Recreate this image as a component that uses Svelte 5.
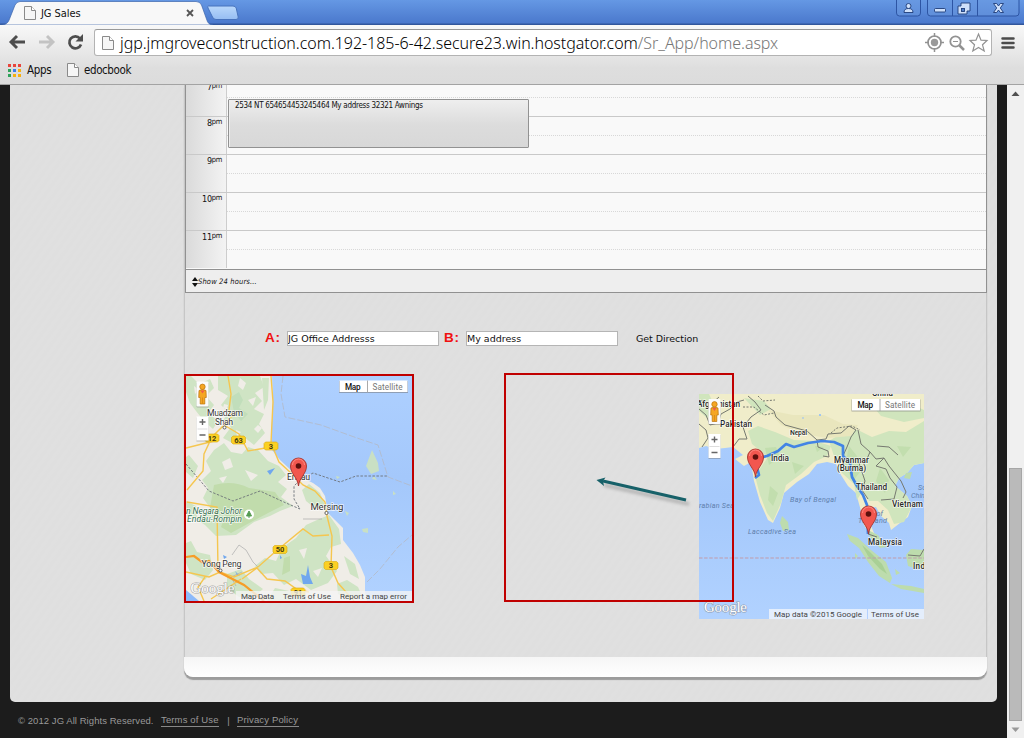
<script>
  const hours = ['8', '9', '10', '11'];
  const apps = ['#e8453c', '#e8453c', '#e8453c', '#2fa25a', '#3b7ded', '#f6b011', '#2fa25a', '#f6b011', '#f6b011'];
</script>

{#snippet page()}
  <svg class="doc" width="12" height="14" viewBox="0 0 12 14"><path d="M.5.5H7.5L11.5 4.5V13.5H.5Z" fill="#f6f6f6" stroke="#8a8a8a" /><path d="M7.5.5V4.5H11.5" fill="#fff" stroke="#8a8a8a" /></svg>
{/snippet}

{#snippet pin(x, y)}
  <g transform="translate({x} {y})">
    <path d="M0 0C-1-9-8-12-8-20A8 8 0 0 1 8-20C8-12 1-9 0 0Z" fill="#f2574f" stroke="#a3332c" stroke-width=".9" />
    <path d="M-6-21A6 6 0 0 1 6-21" fill="none" stroke="#ff8a80" stroke-width="1" />
    <circle cy="-20" r="2.8" fill="#5c100c" />
  </g>
{/snippet}

{#snippet controls(x, y)}
  <g transform="translate({x} {y})" class="roboto">
    <rect x="0" y="1" width="12" height="25" rx="1" fill="#777" opacity=".45" />
    <rect width="12" height="25" rx="1" fill="#fbfbfb" />
    <path d="M2.5 9Q6 7 9.500 9L9.800 16H8.300V22.500H3.700V16H2.200Z" fill="#f5a623" stroke="#b9720c" stroke-width=".7" />
    <path d="M6 16V22" stroke="#c77c12" stroke-width=".6" />
    <path d="M4 9H8L6 12Z" fill="#ee5b4e" />
    <circle cx="6" cy="5.300" r="2.700" fill="#f5a623" stroke="#b9720c" stroke-width=".7" />
    <rect x="0" y="36" width="12" height="24" fill="#777" opacity=".45" />
    <rect y="35" width="12" height="24" fill="#fff" />
    <path d="M1 47.500H11" stroke="#ddd" />
    <path d="M3 40.500H9M6 37.500V43.500M3 53.500H9" stroke="#666" stroke-width="1.400" />
  </g>
{/snippet}

{#snippet types(x, y)}
  <g transform="translate({x} {y})" class="roboto">
    <rect x="-.5" y=".5" width="69" height="12" fill="#777" opacity=".55" />
    <rect width="68" height="11.500" fill="#fff" />
    <path d="M28 0V12" stroke="#aaa" />
    <text x="5.500" y="9" font-size="8.200" fill="#111" font-weight="500" textLength="15.500">Map</text>
    <text x="33" y="9" font-size="8.200" fill="#777" textLength="30">Satellite</text>
  </g>
{/snippet}

{#snippet shield(x, y, n)}
  <g transform="translate({x} {y})">
    <path d="M-5.500-4H5.500L7-2.500V2.500L5.500 4H-5.500L-7 2.500V-2.500Z" fill="#fbd023" stroke="#d9a80e" stroke-width=".6" />
    <text y="2.800" text-anchor="middle" font-size="7.500" font-weight="700" fill="#443b10">{n}</text>
  </g>
{/snippet}

<div class="window">
  <header>
    <div class="strip">
      <div class="tab">
        <svg class="tabshape" width="250" height="25" viewBox="0 0 250 25">
          <defs><linearGradient id="nt" x2="0" y2="1"><stop stop-color="#b9d8fb" /><stop offset="1" stop-color="#96bdf2" /></linearGradient></defs>
          <path d="M0 25C6 25 8 23 9.500 19L15 5Q17 1.500 20 1.500H196Q200 1.500 201.500 5L206.500 19Q208 25 213 25Z" fill="#f8f8f8" stroke="#3c65ac" stroke-width=".7" />
          <path d="M208.500 6H233Q235.500 6 236.200 8L238.200 17Q238.700 19.500 236 19.500H216Q213.500 19.500 212.500 17L208 8Q207.300 6 208.500 6Z" fill="url(#nt)" stroke="#4773bd" />
        </svg>
        {@render page()}
        <span class="title">JG Sales</span>
        <svg class="close" width="8" height="8" viewBox="0 0 8 8"><path d="M1 1L7 7M7 1L1 7" stroke="#555" stroke-width="1.800" /></svg>
      </div>
      <svg class="winbtn" width="128" height="18" viewBox="0 0 128 18">
        <g fill="#6c99df" fill-opacity=".5" stroke="#2d55a4"><path d="M.5-1V13Q.5 16 3.500 16H21.500Q24.500 16 24.500 13V-1Z" /><path d="M31.500-1V13Q31.500 16 34.500 16H120Q123 16 123 13V-1Z" /><path d="M56.500 0V16M81.500 0V16" /></g>
        <g fill="#cfe0fa" stroke="#1e3c78" stroke-width=".9"><circle cx="12.500" cy="6" r="2.500" /><path d="M8 12.500Q8 8.500 12.500 8.500T17 12.500Z" /><rect x="38.500" y="8.500" width="11" height="3.500" rx="1" /><path d="M65 3H74V11H71V14H62V6H65Z" /><rect x="65.500" y="8.500" width="3" height="3" fill="#4e7ecb" /><path d="M97.500 3.500H100.700L102.500 6L104.300 3.500H107.500L104.300 8L107.500 12.500H104.300L102.500 10L100.700 12.500H97.500L100.700 8Z" /></g>
      </svg>
    </div>
    <div class="toolbar">
      <svg class="nav" width="84" height="26" viewBox="0 0 84 26" fill="none">
        <g stroke-width="2.900"><path d="M11 13H25M17 7L11 13L17 19" stroke="#4d4d4d" /><path d="M39 13H53M47 7L53 13L47 19" stroke="#c3c3c3" /></g>
        <path d="M80 9.500A6 6 0 1 0 81 15.500" stroke="#4d4d4d" stroke-width="2.700" /><path d="M83 5V12.500H75.500Z" fill="#4d4d4d" />
      </svg>
      <div class="omnibox">
        {@render page()}
        <span class="url">jgp.jmgroveconstruction.com.192-185-6-42.secure23.win.hostgator.com<i>/Sr_App/home.aspx</i></span>
        <svg class="acts" width="66" height="22" viewBox="0 0 66 22" fill="none" stroke="#929292">
          <circle cx="10.500" cy="10.500" r="6.500" stroke-width="1.700" /><circle cx="10.500" cy="10.500" r="3.700" fill="#999" stroke="none" /><path d="M10.500 1V5M10.500 16V20M1 10.500H5M16 10.500H20" stroke-width="1.500" />
          <circle cx="31.500" cy="9.500" r="5.200" stroke-width="1.800" /><path d="M29 9.500H34" /><path d="M35.500 13.500L40 18" stroke-width="2.500" />
          <path d="M54.500 2L57 8.200L63 8.500L58.500 12.800L60.200 19L54.500 15.500L48.800 19L50.500 12.800L46 8.500L52 8.200Z" stroke-width="1.200" fill="#fff" />
        </svg>
      </div>
      <svg class="menu" width="14" height="14" viewBox="0 0 14 14"><path d="M1.500 2.500H12.500M1.500 7H12.500M1.500 11.500H12.500" stroke="#4b4b4b" stroke-width="2.500" stroke-linecap="round" /></svg>
    </div>
    <div class="bookmarks">
      <div class="apps">{#each apps as c}<b style="background:{c}"></b>{/each}</div>
      <span class="bk1">Apps</span>
      {@render page()}
      <span class="bk2">edocbook</span>
    </div>
  </header>

  <div class="view">
    <div class="site">
      <div class="panel">
        <main>
          <div class="calendar">
            <div class="row first"><div class="hour">7<sup>pm</sup></div><div class="slot"></div></div>
            {#each hours as h}
              <div class="row"><div class="hour">{h}<sup>pm</sup></div><div class="slot"></div></div>
            {/each}
            <div class="event">2534 NT 654654453245464 My address 32321 Awnings</div>
            <div class="more">
              <svg width="6" height="10" viewBox="0 0 6 10"><path d="M3 0L6 4H0ZM3 10L0 6H6Z" fill="#111" /></svg>
              <span>Show 24 hours...</span>
            </div>
          </div>

          <div class="form">
            <label class="a" for="from">A:</label><input id="from" value="JG Office Addresss" />
            <label class="b" for="to">B:</label><input id="to" value="My address" />
            <span class="get">Get Direction</span>
          </div>

          <div class="maps">
            <div class="frame">
              <svg width="226" height="225" viewBox="186 376 226 225" class="roboto">
                <defs>
                  <linearGradient id="sea" x2="0" y2="1"><stop stop-color="#aed0ff" /><stop offset=".45" stop-color="#a4c8fb" /><stop offset="1" stop-color="#b1d2ff" /></linearGradient>
                </defs>
                <rect x="186" y="376" width="226" height="225" fill="url(#sea)" />
                <path d="M272 376L273 400L272 420L271 435L272 450L280 460L293 472L301 477L313 483L320 488L325 496L328 513L335 520L343 528V540L353 553L360 565L365 577V592L367 601H186V376Z" fill="#f0ede7" />
                <g fill="#cfe4c4">
                  <path d="M191 376L199 384L210 379L214 388L206 396L214 405L208 413L218 421L213 429L204 421L196 411L190 403L186 392V376Z" />
                  <path d="M218 376H260L264 387L255 393L262 401L254 409L264 414L259 424L265 433L254 445L244 437L234 444L223 438L231 427L222 421L229 413L221 405L228 396L218 390Z" />
                  <path d="M231 397L239 392L243 400L239 408L248 414L241 421L234 412Z" fill="#c1debb" />
                  <path d="M214 450L224 443L231 452L242 454L248 447L258 450L268 461L279 466L286 475L278 482L287 489L281 497L293 506L280 511L270 516L254 522L236 535L216 536L205 525L196 519L211 509L203 498L208 488L202 480L211 471L206 461Z" />
                  <path d="M309 484L320 493L325 505L316 509L306 501L302 490Z" />
                  <path d="M317 520L329 515L339 529L341 544L331 547L326 556L337 571L328 583L311 590L296 579L284 585L273 573L261 574L255 566L265 558L276 561L282 548L296 538L306 525Z" />
                  <path d="M344 556L355 564L359 579L350 574ZM186 501L196 506L197 519L187 516Z" />
                  <path d="M191 541L197 552L210 555L213 570L205 580L191 574L186 563V543ZM227 574L241 569L249 579L263 589L254 597H239L227 588ZM189 455L198 466L193 478L186 472V457ZM275 588L294 592L309 601H267Z" />
                  <path d="M337 584L347 580L358 587L362 596L350 600L338 594ZM262 378H269L268 400L264 410Z" />
                </g>
                <g fill="#c1dcac"><path d="M214 485Q233 480 249 488L275 492L284 505L270 512L253 521L231 533L221 527L226 514L210 508Z" /><path d="M284 558L290 556V571L282 575Z" /></g>
                <path fill="#f0ede7" d="M224 404L228 405L227 409L223 408ZM240 378L246 383L243 390L238 386ZM248 400L256 397L253 406ZM222 462L230 458L233 467L225 470ZM245 470L258 475L251 481ZM299 550L307 548L304 559ZM313 571L322 568L318 577ZM194 386L199 390L195 394ZM219 478L227 476L223 483ZM284 535L291 530L288 539ZM258 425L262 428L258 433L254 429ZM236 430L241 432L237 437Z" />
                <g fill="#c9e0c4"><path d="M372 450L378 463L379 471L371 474L366 466ZM374 476L377 480L372 479Z" /><path d="M362 529L368 528L368 533L363 532ZM393 491L396 494L393 495ZM345 511L349 513L347 516ZM336 476L340 477L337 479Z" /></g>
                <g fill="#70a7ee"><path d="M267 471L275 468L270 475ZM301 574L306 576L308 565L310 577L313 584L303 584ZM235 571L240 576L237 575ZM223 555L227 557L224 559ZM280 555L282 558L280 559Z" /><path d="M186 590L199 601H186Z" fill="#8dbafa" /></g>
                <g fill="none" stroke="#aaa" stroke-width=".7"><path d="M283 376L281 394L285 417L321 425L357 438L378 445L388 477L412 486M367 582L380 569L398 547L412 535" stroke="#b5b6bd" stroke-dasharray="7 2" /><path d="M232 555L239 545L246 550L253 562L258 567M303 519H322M236 586L231 577L242 572" /></g>
                <path d="M186 464L209 491L233 501L260 491L286 503L300 509L294 499V486L300 480L313 473L340 482L356 476H388" fill="none" stroke="#6c7278" stroke-width=".9" stroke-dasharray="2.500 1.500" />
                <g fill="none" stroke="#f5c64f" stroke-width="1.400">
                  <path d="M228 376L231 394L229 410L232 416L224 425L212 437L204 454L203 471L187 490M186 448L214 441M224 425L239 434L248 451L271 447M271 376L273 402L271 443L279 462L291 473L303 485L315 491L325 502L327 516L332 536L331 567L338 583L354 601M187 502L217 507L218 570M186 572L209 577L220 572L234 577L258 567L275 552L303 529L313 536L329 535M242 579L257 568L267 579L285 581L298 590L309 592M204 601L198 587L205 577M211 599L241 579" />
                </g>
                <path d="M186 557L194 556L202 562L209 561L219 572L244 585L264 601" stroke="#f69d27" stroke-width="2.200" fill="none" />
                {@render shield(212, 438, '12')}{@render shield(238.500, 440, '63')}{@render shield(271, 446, '3')}{@render shield(280, 549.500, '50')}{@render shield(331, 565.500, '3')}{@render shield(298, 592, '91')}
                <g font-size="8.800" fill="#333" stroke="#fff" stroke-width="1.600" stroke-opacity=".75" paint-order="stroke">
                  <text x="207" y="416" textLength="36">Muadzam</text><text x="215" y="424.500" textLength="18">Shah</text>
                  <text x="287" y="480" textLength="23">Endau</text><text x="310.500" y="509.500" font-size="9.600" textLength="33">Mersing</text><text x="201.500" y="567" textLength="40">Yong Peng</text>
                  <g fill="#357050" font-style="italic"><text x="186" y="513.500" textLength="56">n Negara Johor</text><text x="187" y="522" textLength="55">Endau-Rompin</text></g>
                </g>
                <g fill="#fff" stroke="#555" stroke-width=".9"><circle cx="224.500" cy="427.500" r="1.500" /><circle cx="326.500" cy="513" r="1.600" /><circle cx="220.500" cy="570.500" r="1.500" /></g>
                <circle cx="249" cy="514.500" r="5" fill="#fff" /><path d="M249 511L251.500 516H246.500ZM249 516V518" fill="#559b51" stroke="#559b51" />
                {@render pin(298.500, 486)}
                {@render controls(196.500, 381.500)}
                {@render types(339.500, 380.500)}
                <text x="190.500" y="593" class="logo" textLength="44">Google</text>
                <rect x="236" y="591" width="176" height="10" fill="#f5f5f5" opacity=".78" />
                <g font-size="8" fill="#444"><text x="241" y="599" textLength="33">Map Data</text><text x="283" y="599" textLength="48">Terms of Use</text><text x="340" y="599" textLength="67">Report a map error</text></g>
              </svg>
            </div>

            <div class="frame target">
              <svg class="route roboto" width="225" height="225" viewBox="699 394 225 225">
                <rect x="699" y="394" width="225" height="225" fill="url(#sea)" />
                <path d="M699 394H924V463L914 465L907 473L899 478L895 486L907 496L912 506L908 517L900 523L891 530L889 523L881 516L876 507L867 508L869 521L874 533L884 546L880 547L870 535L864 525L861 511L856 493L848 486L841 475L836 464L827 462L817 464L809 474L797 482L784 493L780 508L773 523L768 520L760 502L754 481L751 462L744 466L735 459L743 455L733 447L725 448V512L725 448L715 449L706 446L699 448Z" fill="#f0edca" />
                <g fill="#d0e5bd">
                  <path d="M758 426L775 432L794 440L815 441L831 446L827 456L814 462L801 474L786 485L781 503L773 521L767 513L760 495L755 476L768 457L752 444L748 431Z" />
                  <path d="M829 441L847 430L858 430L872 437L889 431L906 432L924 421V463L914 465L907 473L899 478L895 486L907 496L912 506L904 522L894 524L888 510L878 501L869 501L863 490L857 500L854 484L842 473L835 459Z" />
                  <path d="M699 394H709L716 409L707 418L699 411ZM871 404L900 399L924 410V418L904 422L881 416ZM744 398L764 401L771 409L760 415Z" />
                </g>
                <path d="M768 410L793 415L824 415L843 424L858 425L851 436L828 438L802 434L781 425Z" fill="#e9e6bd" />
                <g fill="#bddbaa" opacity=".75"><path d="M770 486L778 493L773 506L768 500ZM849 446L857 456L860 472L853 481L845 466ZM880 468L889 480L885 493L876 481ZM815 446L824 447L817 452ZM792 462L804 466L795 474ZM897 446L911 447L903 457ZM765 448L776 447L780 457L769 465Z" /></g>
                <g fill="#bddcad"><path d="M782 516L788 522L789 530L783 531L780 523ZM847 534L858 538L871 550L886 562L892 578L890 583L879 576L868 562L859 548L850 541ZM868 530L878 535L886 547L880 548L870 537ZM924 550L911 549L906 555L908 566L917 569L924 567ZM891 584L911 586L924 589V593L901 589ZM906 473L912 472L910 479L904 478ZM855 553L858 556L855 559ZM895 569L900 573L896 575Z" /><path d="M862 545L870 552L882 564L887 574L880 569L868 556Z" fill="#a9d096" /></g>
                <g fill="none" stroke="#767970" stroke-width="1">
                  <path d="M699 409L706 415L710 425L718 423L721 414L730 409L737 402L744 400M699 424L706 430L708 438L702 447M733 447L739 439L747 439L743 427L751 417L761 410L755 402L748 396M765 405L774 411L776 417L785 425L807 431L817 440L826 439L828 434L841 433L849 426L856 430L851 437L847 447L842 458L837 463M817 440L818 447L828 451L829 457L823 456M858 430L861 444L870 452L876 459L884 458L889 466L901 481L906 492L903 498M870 452L866 461L859 463L865 481L862 490L868 499M884 458L876 466L886 469L890 478L897 487L894 499L881 500M877 446L889 447L898 455M699 400L711 404L719 397M868 534L877 537M908 555L920 556L924 549" />
                  <path d="M743 407L754 407L764 415L774 413M758 396L763 401L775 400M831 433L837 428L852 426L860 430" stroke-dasharray="2 1.500" />
                </g>
                <path d="M699 558H924" stroke="#c09cac" stroke-width="1.200" stroke-dasharray="3.500 1.600" />
                <path d="M755 478L759 475L755 459L767 456L778 451L786 444L794 447L808 443L822 441L834 442L843 446L843 456L850 463L852 477L857 486L863 495L867 505L868 534" stroke="#4284e5" stroke-width="2.700" fill="none" stroke-linejoin="round" />
                <g fill="#89bbff"><circle cx="820" cy="415" r="1" /><circle cx="803" cy="418" r=".8" /></g>
                <g font-size="8.200" font-weight="500" fill="#282828" stroke="#fff" stroke-width="1.500" stroke-opacity=".7" paint-order="stroke">
                  <text x="697" y="407" textLength="43">Afghanistan</text><text x="720" y="426.500" textLength="32">Pakistan</text><text x="872" y="396" textLength="21">China</text><text x="790" y="434.500" font-size="7" textLength="17">Nepal</text><text x="771" y="460.500" textLength="18">India</text><text x="834" y="463" textLength="35">Myanmar</text><text x="837" y="471" textLength="29">(Burma)</text><text x="856" y="489.500" textLength="31">Thailand</text><text x="892" y="507" textLength="31">Vietnam</text><text x="868" y="544.500" textLength="34">Malaysia</text><text x="913" y="569" textLength="38">Indonesia</text>
                </g>
                <g font-size="7.200" font-style="italic" fill="#5f7fac"><text x="699" y="508" textLength="35">rabian Sea</text><text x="790" y="502" textLength="46">Bay of Bengal</text><text x="748" y="533.500" textLength="48">Laccadive Sea</text><text x="861" y="515.500" textLength="22">Gulf of</text><text x="858" y="522.500" textLength="29">Thailand</text><text x="918" y="490">South</text><text x="911" y="498">China</text></g>
                {@render pin(755.500, 477)}{@render pin(868.500, 534)}
                {@render controls(708.500, 399)}
                {@render types(852, 399)}
                <text x="704" y="612" class="logo" textLength="43">Google</text>
                <rect x="769" y="609" width="155" height="10" fill="#edf3fb" opacity=".85" /><path d="M867.500 609V619" stroke="#b3d1ff" />
                <g font-size="8" fill="#444"><text x="774" y="617" textLength="88">Map data ©2015 Google</text><text x="871" y="617" textLength="48">Terms of Use</text></g>
              </svg>
              <div class="outline"></div>
              <svg class="arrow" width="104" height="36" viewBox="592 474 104 36">
                <path d="M604 485L689 504" stroke="#555" stroke-width="4" opacity=".28" class="soft" />
                <path d="M603 481L686 500" stroke="#176169" stroke-width="3" /><path d="M596.500 480L605.500 477.500L603 481L604 486Z" fill="#176169" />
              </svg>
            </div>
          </div>
          <div class="bottom"></div>
        </main>
      </div>
      <footer><span class="copy">© 2012 JG All Rights Reserved.</span><span class="lnk terms">Terms of Use</span><em>|</em><span class="lnk priv">Privacy Policy</span></footer>
    </div>
    <div class="scroll">
      <svg width="9" height="6" viewBox="0 0 9 6"><path d="M4.500 .5L8.500 5H.5Z" fill="#505050" /></svg>
      <div class="thumb"></div>
      <svg width="9" height="6" viewBox="0 0 9 6"><path d="M4.500 5L8.500 .5H.5Z" fill="#999" /></svg>
    </div>
  </div>
</div>

<style>
  :global(body) { margin: 0; overflow: hidden; }
  * { box-sizing: border-box; }
  svg { display: block; flex: none; }
  .window { width: 1024px; height: 738px; display: flex; flex-direction: column; overflow: hidden; font-family: "DejaVu Sans Condensed", "DejaVu Sans", sans-serif; white-space: nowrap; color: #111; }
  header { height: 85px; flex: none; border-bottom: 1px solid #a3a3a3; background: linear-gradient(#f8f8f8 25px, #dedede 68px, #dcdcdc); }
  .strip { height: 25px; background: linear-gradient(#6598e4, #4b79cd 23px, #31569c 24px); display: flex; justify-content: space-between; }
  .tab { width: 213px; height: 25px; position: relative; display: flex; align-items: center; padding-left: 24px; }
  .tabshape { position: absolute; left: 0; top: 0; }
  .doc { position: relative; }
  .title { position: relative; margin-left: 5px; width: 140px; font-size: 11px; padding-top: 2px; letter-spacing: -.05px; }
  .close { position: relative; margin-left: 5px; margin-top: 1px; }
  .toolbar { height: 35px; padding-top: 4px; display: flex; }
  .nav { margin-right: 10px; }
  .omnibox { width: 898px; height: 27px; border: 1px solid #b3b3b3; border-top-color: #999; border-radius: 3px; background: #fff; display: flex; align-items: center; padding-left: 7px; }
  .url { margin-left: 6px; width: 804px; flex: none; font: 16px "Noto Sans", "Open Sans", sans-serif; font-weight: 300; letter-spacing: -.05px; color: #000; padding-top: 1px; }
  .url i { color: #777; font-style: normal; }
  .menu { margin: 7px 0 0 9px; }
  .bookmarks { height: 24px; display: flex; align-items: center; font-size: 11.500px; padding: 0 0 4px 8px; }
  .apps { display: grid; grid-template-columns: repeat(3, 3px); grid-auto-rows: 3px; gap: 2px; }
  .bk1 { width: 40px; margin-left: 6px; letter-spacing: -.3px; }
  .bk2 { margin-left: 5px; letter-spacing: -.4px; }
  .view { height: 653px; display: flex; }
  .site { width: 1007px; background: #1c1c1c; padding: 0 10px; }
  .panel { height: 617px; padding: 0 10px 0 174px; border-radius: 0 0 5px 5px; background: repeating-linear-gradient(125deg, #dfdfdf 0 2px, #e0e0e0 3px 5px, #dfdfdf 7px); }
  main { width: 803px; height: 592px; border: 1px solid #c6c6c6; border-top: 0; border-bottom: 0; border-radius: 0 0 9px 9px; box-shadow: 0 3px 1px #9c9c9c; display: flex; flex-direction: column; position: relative; }
  .calendar { width: 802px; height: 208px; border: 1px solid #919191; border-top: 0; position: relative; overflow: hidden; background: #f9f9f9; }
  .row { height: 38px; display: grid; grid-template-columns: 41px 1fr; }
  .row.first { height: 31px; }
  .row.first .hour { line-height: 1px; padding-top: 0; }
  .row.first .slot { background-position: 0 12px; border-top: 0; }
  .row:not(.first) { border-top: 1px solid #c9c9c9; }
  .hour { background: linear-gradient(90deg, #dadada, #f3f3f3); border-right: 1px solid #cdcdcd; text-align: right; padding: 1px 4px 0 0; font-size: 9px; line-height: 11px; letter-spacing: -.3px; }
  .hour sup { font-size: 7.500px; line-height: 1px; vertical-align: 2px; }
  .slot { background: repeating-linear-gradient(90deg, #d8d8d8 0 1px, #f9f9f9 1px 2px) 0 18px / 100% 1px no-repeat; }
  .event { position: absolute; left: 42px; top: 14px; width: 301px; height: 49px; border: 1px solid #929292; border-radius: 1px; box-shadow: inset 1px 1px #eee; background: linear-gradient(#eee, #dcdcdc 25px, #d8d8d8); padding: 1px 0 0 6px; font-size: 8px; line-height: 10px; letter-spacing: -.3px; }
  .more { height: 24px; border-top: 1px solid #919191; background: #eee; display: flex; align-items: center; padding-left: 6px; font-size: 7.500px; letter-spacing: .15px; position: absolute; left: 0; right: 0; top: 184px; font-style: italic; }
  .form { height: 82px; display: flex; align-items: flex-start; padding: 37px 0 0 80px; font-family: "DejaVu Sans", sans-serif; font-size: 9px; }
  .form label { font: bold 13.500px/15px "Liberation Sans", sans-serif; letter-spacing: .8px; color: #f01010; width: 22px; }
  .form .b { margin-left: 5px; }
  input { width: 152px; height: 15px; margin-top: 1px; border: 1px solid #b5b5b5; padding: 0; font: 9.500px "DejaVu Sans", sans-serif; background: #fff; color: #111; }
  .get { margin: 3px 0 0 18px; font-size: 9.500px; line-height: 12px; letter-spacing: -.05px; }
  .maps { height: 282px; display: flex; gap: 90px; padding: 0; margin-left: -1px; }
  .frame { width: 230px; height: 229px; border: 2px solid #c00000; position: relative; margin-top: -1px; }
  .target { border-color: transparent; margin-top: -2px; }
  .outline { position: absolute; inset: -2px; border: 2px solid #c00000; }
  .route { position: absolute; left: 193px; top: 19px; }
  .arrow { position: absolute; left: 86px; top: 99px; }
  .soft { filter: blur(1.500px); }
  .roboto { font-family: Roboto, sans-serif; }
  .logo { font: 15px "Liberation Serif", serif; fill: #fff; stroke: #777; stroke-width: 1.200px; stroke-opacity: .6; paint-order: stroke; }
  .bottom { height: 20px; margin: 0 -1px; background: linear-gradient(#f6f6f6, #fff); border-radius: 0 0 9px 9px; }
  footer { height: 36px; display: flex; align-items: center; padding-left: 8px; color: #999; font: 9.500px "Liberation Sans", sans-serif; letter-spacing: .14px; }
  .copy { width: 143px; letter-spacing: .06px; }
  .lnk { border-bottom: 1px solid #888; line-height: 12px; }
  .terms { width: 58px; }
  .priv { width: 62px; }
  footer em { font-style: normal; width: 18px; text-align: center; padding-left: 1px; }
  .scroll { width: 17px; background: #f0f0f0; display: flex; flex-direction: column; align-items: center; padding: 6px 0 5px; }
  .thumb { width: 13px; height: 253px; margin: auto 0 6px; background: #bababa; border: 1px solid #a6a6a6; }
</style>
